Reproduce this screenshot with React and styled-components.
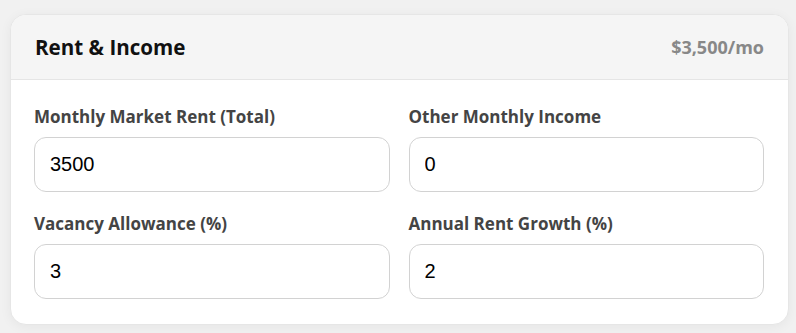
import React from "react";
import styled, { createGlobalStyle } from "styled-components";

const Global = createGlobalStyle`
  html, body { margin: 0; padding: 0; background: #f1f1f1; }
  body { font-family: "Open Sans", "Noto Sans", sans-serif; }
  * { box-sizing: border-box; }
`;

const Page = styled.div`
  padding: 14px 7px 8px 10px;
`;

const Card = styled.section`
  background: #fff;
  border: 1px solid #e6e6e6;
  border-radius: 16px;
  box-shadow: 0 2px 12px rgba(0, 0, 0, 0.05);
  overflow: hidden;
`;

const Header = styled.header`
  display: flex;
  align-items: center;
  justify-content: space-between;
  height: 65px;
  padding: 0 24px;
  background: #f5f5f5;
  border-bottom: 1px solid #e5e5e5;
`;

const Title = styled.h2`
  margin: 0;
  font-size: 20.6px;
  font-weight: 700;
  color: #111;
`;

const Summary = styled.span`
  font-size: 18px;
  font-weight: 700;
  color: #888;
`;

const Body = styled.div`
  display: grid;
  grid-template-columns: 1fr 1fr;
  column-gap: 19px;
  row-gap: 20px;
  padding: 25px 24px 25px 23px;
`;

const Field = styled.label`
  display: flex;
  flex-direction: column;
  gap: 8px;
`;

const Label = styled.span`
  font-size: 17px;
  line-height: 24px;
  font-weight: 700;
  color: #444;
`;

const Input = styled.input`
  height: 55px;
  padding: 0 15px;
  border: 1px solid #d2d2d2;
  border-radius: 12px;
  font-family: "Liberation Sans", Arial, sans-serif;
  font-size: 20px;
  color: #000;
  background: #fff;
  outline: none;
`;

const fields = [
  { label: "Monthly Market Rent (Total)", value: "3500" },
  { label: "Other Monthly Income", value: "0" },
  { label: "Vacancy Allowance (%)", value: "3" },
  { label: "Annual Rent Growth (%)", value: "2" },
];

export default function App() {
  return (
    <>
      <Global />
      <Page>
        <Card>
          <Header>
            <Title>Rent &amp; Income</Title>
            <Summary>$3,500/mo</Summary>
          </Header>
          <Body>
            {fields.map((f) => (
              <Field key={f.label}>
                <Label>{f.label}</Label>
                <Input type="text" defaultValue={f.value} />
              </Field>
            ))}
          </Body>
        </Card>
      </Page>
    </>
  );
}
